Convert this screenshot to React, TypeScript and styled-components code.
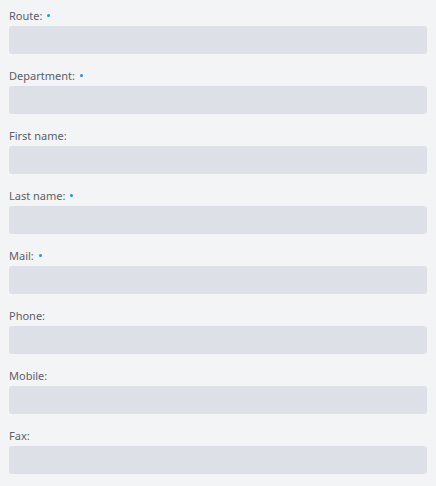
import React from "react";
import styled, { createGlobalStyle } from "styled-components";

const Global = createGlobalStyle`
  html, body { margin: 0; padding: 0; background: #f3f4f6; }
  body { font-family: "Segoe UI", "Noto Sans", "Liberation Sans", sans-serif; }
`;

const Form = styled.div`
  display: flex;
  flex-direction: column;
  gap: 12px;
  padding: 6px 9px 12px 9px;
  background: #f3f4f6;
`;

const Field = styled.div`
  display: flex;
  flex-direction: column;
`;

const Label = styled.label`
  box-sizing: border-box;
  display: flex;
  align-items: center;
  gap: 5px;
  height: 20px;
  padding-bottom: 2px;
  font-size: 11px;
  color: #5b6068;
`;

const Required = styled.span`
  width: 3px;
  height: 3px;
  border-radius: 50%;
  background: #2a8fd4;
  margin-top: 1px;
`;

const Input = styled.input`
  box-sizing: border-box;
  height: 28px;
  width: 100%;
  border: none;
  border-radius: 3px;
  background: #dde1e7;
  outline: none;
  padding: 0 8px;
  font-family: inherit;
`;

const fields = [
  { label: "Route:", required: true },
  { label: "Department:", required: true },
  { label: "First name:", required: false },
  { label: "Last name:", required: true },
  { label: "Mail:", required: true },
  { label: "Phone:", required: false },
  { label: "Mobile:", required: false },
  { label: "Fax:", required: false },
];

export default function App() {
  return (
    <>
      <Global />
      <Form>
        {fields.map((f) => (
          <Field key={f.label}>
            <Label>
              {f.label}
              {f.required && <Required />}
            </Label>
            <Input />
          </Field>
        ))}
      </Form>
    </>
  );
}
